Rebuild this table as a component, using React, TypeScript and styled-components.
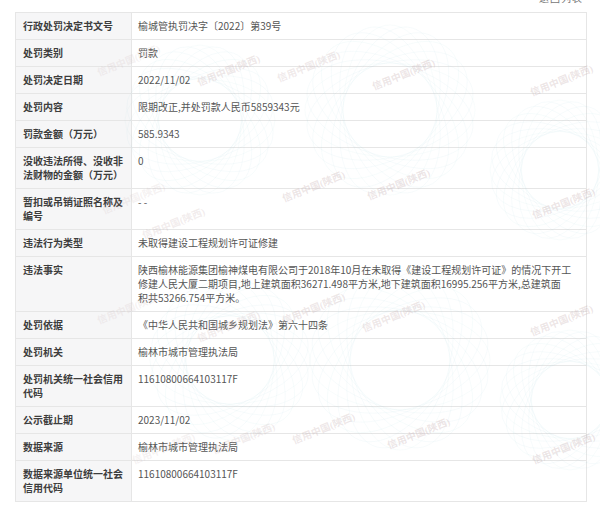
import React from "react";
import styled, { createGlobalStyle } from "styled-components";

const GlobalStyle = createGlobalStyle`
  html, body {
    margin: 0;
    padding: 0;
    background: #fff;
  }
  body {
    font-family: "Noto Sans CJK SC", "Noto Sans", "Liberation Sans", sans-serif;
  }
`;

const rows: { label: string; value: string }[] = [
  { label: "行政处罚决定书文号", value: "榆城管执罚决字〔2022〕第39号" },
  { label: "处罚类别", value: "罚款" },
  { label: "处罚决定日期", value: "2022/11/02" },
  { label: "处罚内容", value: "限期改正,并处罚款人民币5859343元" },
  { label: "罚款金额（万元）", value: "585.9343" },
  { label: "没收违法所得、没收非法财物的金额（万元）", value: "0" },
  { label: "暂扣或吊销证照名称及编号", value: "- -" },
  { label: "违法行为类型", value: "未取得建设工程规划许可证修建" },
  {
    label: "违法事实",
    value:
      "陕西榆林能源集团榆神煤电有限公司于2018年10月在未取得《建设工程规划许可证》的情况下开工\n修建人民大厦二期项目,地上建筑面积36271.498平方米,地下建筑面积16995.256平方米,总建筑面\n积共53266.754平方米。",
  },
  { label: "处罚依据", value: "《中华人民共和国城乡规划法》第六十四条" },
  { label: "处罚机关", value: "榆林市城市管理执法局" },
  { label: "处罚机关统一社会信用代码", value: "11610800664103117F" },
  { label: "公示截止期", value: "2023/11/02" },
  { label: "数据来源", value: "榆林市城市管理执法局" },
  { label: "数据来源单位统一社会信用代码", value: "11610800664103117F" },
];

// watermark spots, roughly where the tiled background shows them
const marks: { x: number; y: number; o: number }[] = [
  { x: 95, y: 52, o: 0.5 },
  { x: 195, y: 62, o: 0.9 },
  { x: 275, y: 58, o: 0.8 },
  { x: 370, y: 66, o: 1 },
  { x: 528, y: 72, o: 1 },
  { x: 100, y: 190, o: 0.5 },
  { x: 140, y: 215, o: 0.7 },
  { x: 280, y: 178, o: 1 },
  { x: 365, y: 176, o: 1 },
  { x: 530, y: 195, o: 1 },
  { x: 95, y: 300, o: 0.5 },
  { x: 195, y: 318, o: 0.7 },
  { x: 280, y: 300, o: 0.9 },
  { x: 360, y: 308, o: 0.9 },
  { x: 528, y: 312, o: 1 },
  { x: 130, y: 440, o: 0.5 },
  { x: 210, y: 430, o: 0.7 },
  { x: 290, y: 420, o: 0.9 },
  { x: 385, y: 425, o: 1 },
  { x: 530, y: 440, o: 1 },
];

const Page = styled.div`
  position: relative;
  width: 600px;
  height: 510px;
  overflow: hidden;
  padding: 0 13px 0 15px;
  box-sizing: border-box;
`;

const TopBar = styled.div`
  display: flex;
  justify-content: flex-end;
  height: 12px;
  overflow: hidden;
  padding-right: 4px;
`;

const BackLink = styled.span`
  font-size: 10px;
  line-height: 12px;
  color: #777;
  margin-top: -8px;
  letter-spacing: 1px;
`;

const Table = styled.div`
  display: grid;
  grid-template-columns: 116px 1fr;
  border: 1px solid #e6e6e6;
  border-bottom: none;
`;

const Label = styled.div`
  background: rgba(244, 245, 246, 0.85);
  border-right: 1px solid #e6e6e6;
  border-bottom: 1px solid #e6e6e6;
  padding: 6px 7px;
  font-size: 10px;
  line-height: 14px;
  font-weight: 700;
  color: #3d3d3d;
`;

const Value = styled.div`
  border-bottom: 1px solid #e6e6e6;
  padding: 6px;
  font-size: 10px;
  line-height: 14px;
  color: #555;
  white-space: pre-line;
  word-break: break-all;
`;

const Overlay = styled.div`
  position: absolute;
  inset: 0;
  pointer-events: none;
`;

const Mark = styled.span`
  position: absolute;
  font-family: "Liberation Serif", "Noto Sans CJK SC", serif;
  font-size: 10px;
  font-weight: 700;
  color: rgba(200, 175, 178, 0.32);
  transform: rotate(-22deg);
  white-space: nowrap;
`;

function Rosette({ cx, cy, r }: { cx: number; cy: number; r: number }) {
  const petals = Array.from({ length: 12 }, (_, i) => i * 15);
  return (
    <g>
      {petals.map((a) => (
        <ellipse
          key={a}
          cx={cx}
          cy={cy}
          rx={r}
          ry={r * 0.55}
          transform={`rotate(${a} ${cx} ${cy})`}
          fill="none"
          stroke="rgba(150, 210, 215, 0.12)"
          strokeWidth="0.6"
        />
      ))}
    </g>
  );
}

export default function App() {
  return (
    <>
      <GlobalStyle />
      <Page>
        <TopBar>
          <BackLink>返回列表</BackLink>
        </TopBar>
        <Table>
          {rows.map((r) => (
            <React.Fragment key={r.label}>
              <Label>{r.label}</Label>
              <Value>{r.value}</Value>
            </React.Fragment>
          ))}
        </Table>
        <Overlay>
          <svg width="600" height="510">
            <Rosette cx={200} cy={120} r={75} />
            <Rosette cx={390} cy={110} r={85} />
            <Rosette cx={560} cy={170} r={70} />
            <Rosette cx={230} cy={360} r={80} />
            <Rosette cx={400} cy={360} r={90} />
            <Rosette cx={570} cy={400} r={70} />
          </svg>
          {marks.map((m, i) => (
            <Mark key={i} style={{ left: m.x, top: m.y, opacity: m.o }}>
              信用中国(陕西)
            </Mark>
          ))}
        </Overlay>
      </Page>
    </>
  );
}
